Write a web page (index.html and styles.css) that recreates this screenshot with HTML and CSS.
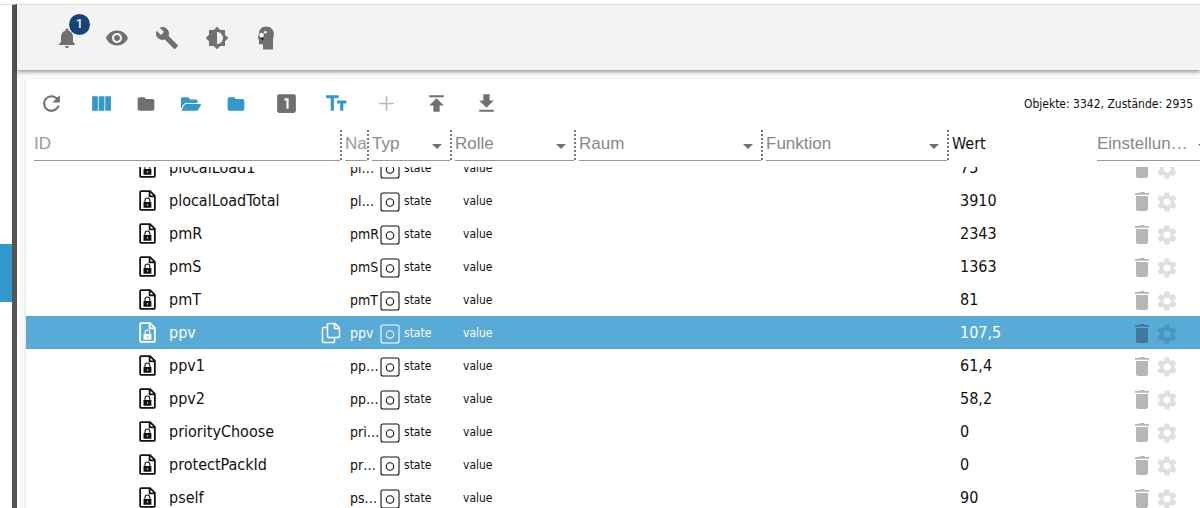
FILE: index.html
```html
<!DOCTYPE html>
<html lang="de">
<head>
<meta charset="utf-8">
<title>Objekte</title>
<link rel="stylesheet" href="styles.css">
</head>
<body>
<svg class="sprite" aria-hidden="true">
  <symbol id="bell" viewBox="0 0 24 24"><path d="M12 22c1.1 0 2-.9 2-2h-4c0 1.1.89 2 2 2zm6-6v-5c0-3.070-1.640-5.640-4.500-6.320V4c0-.83-.67-1.500-1.500-1.500s-1.500.67-1.500 1.500v.68C7.630 5.360 6 7.920 6 11v5l-2 2v1h16v-1l-2-2z"/></symbol>
  <symbol id="eye" viewBox="0 0 24 24"><path d="M12 4.500C7 4.500 2.730 7.610 1 12c1.730 4.390 6 7.500 11 7.500s9.270-3.110 11-7.500c-1.730-4.390-6-7.500-11-7.500zM12 17c-2.760 0-5-2.240-5-5s2.240-5 5-5 5 2.240 5 5-2.240 5-5 5zm0-8c-1.660 0-3 1.340-3 3s1.340 3 3 3 3-1.340 3-3-1.340-3-3-3z"/></symbol>
  <symbol id="wrench" viewBox="0 0 24 24"><path d="M22.700 19l-9.100-9.100c.9-2.300.4-5-1.500-6.900-2-2-5-2.400-7.400-1.300L9 6 6 9 1.600 4.700C.4 7.100.9 10.100 2.900 12.100c1.900 1.900 4.600 2.400 6.900 1.500l9.100 9.100c.4.4 1 .4 1.400 0l2.300-2.300c.5-.4.5-1.100.1-1.400z"/></symbol>
  <symbol id="bright" viewBox="0 0 24 24"><path d="M20 15.310L23.310 12 20 8.690V4h-4.690L12 .69 8.690 4H4v4.690L.69 12 4 15.310V20h4.690L12 23.310 15.310 20H20v-4.690zM12 18V6c3.310 0 6 2.690 6 6s-2.690 6-6 6z"/></symbol>
  <symbol id="head" viewBox="0 0 24 24"><path d="M11.300.5C7 .5 3.900 3.300 3.900 7.500L2.700 12.600l1.200.7V17c0 .9.500 1.300 1.300 1.300H8V23.400h10V12.800c.6-1.400.9-3 .9-4.700C18.900 3.700 15.700.5 11.300.5z"/><circle cx="6.600" cy="9" r="2.300" fill="#fff"/><circle cx="10.400" cy="6.200" r="1.200" fill="#fff"/><circle cx="7.400" cy="13" r="1.200" fill="#222"/></symbol>
  <symbol id="refresh" viewBox="0 0 24 24"><path d="M17.650 6.350C16.200 4.900 14.210 4 12 4c-4.420 0-7.990 3.580-7.990 8s3.570 8 7.990 8c3.730 0 6.840-2.550 7.730-6h-2.080c-.82 2.330-3.040 4-5.650 4-3.310 0-6-2.690-6-6s2.690-6 6-6c1.660 0 3.140.69 4.220 1.780L13 11h7V4l-2.350 2.350z"/></symbol>
  <symbol id="columns" viewBox="0 0 24 24"><path d="M3 5h5.500v14H3zM9.300 5h5.500v14H9.300zM15.600 5h5.500v14h-5.500z"/></symbol>
  <symbol id="folder" viewBox="0 0 24 24"><path d="M10 4H4c-1.100 0-1.990.9-1.990 2L2 18c0 1.100.9 2 2 2h16c1.100 0 2-.9 2-2V8c0-1.100-.9-2-2-2h-8l-2-2z"/></symbol>
  <symbol id="folder-open" viewBox="0 0 576 512"><path d="M572.700 292.100L500.300 416.200A64 64 0 0 1 445 448H45.100c-18.500 0-30-20.100-20.700-36.100l72.400-124.100A64 64 0 0 1 152 256h400c18.500 0 30 20.100 20.700 36.100zM152 224h328v-48c0-26.500-21.500-48-48-48H272l-64-64H48C21.500 64 0 85.500 0 112v278.100l69.100-118.400C86.200 242.300 118 224 152 224z"/></symbol>
  <symbol id="one" viewBox="0 0 24 24"><path d="M19 3H5c-1.100 0-2 .9-2 2v14c0 1.100.9 2 2 2h14c1.100 0 2-.9 2-2V5c0-1.100-.9-2-2-2zm-5 14h-2V9h-2V7h4v10z"/></symbol>
  <symbol id="size" viewBox="0 0 24 24"><path d="M2 4v3h4.500v12h3V7H14V4H2zm19.500 5h-9v3h3v7h3v-7h3V9z"/></symbol>
  <symbol id="plus" viewBox="0 0 24 24"><path d="M19 12.800h-6.200V19h-1.600v-6.200H5v-1.600h6.200V5h1.600v6.200H19z"/></symbol>
  <symbol id="upload" viewBox="0 0 24 24"><path d="M5 4v2h14V4H5zm0 10h4v6h6v-6h4l-7-7-7 7z"/></symbol>
  <symbol id="download" viewBox="0 0 24 24"><path d="M19 9h-4V3H9v6H5l7 7 7-7zM5 18v2h14v-2H5z"/></symbol>
  <symbol id="file-lock" viewBox="0 0 16 20"><path d="M2 1H10.500l4.500 4.500V18a1 1 0 0 1-1 1H2a1 1 0 0 1-1-1V2a1 1 0 0 1 1-1zM10 1v5h5" fill="none" stroke="currentColor" stroke-width="1.700"/><path d="M5.600 12V9.900a2.300 2.300 0 0 1 4.600 0V12" fill="none" stroke="currentColor"/><path fill-rule="evenodd" d="M4.200 11.500h7.500v5.500H4.200zM7.400 13.600h1.200v1.200H7.400z"/></symbol>
  <symbol id="state" viewBox="0 0 20 20"><rect x="1" y="1" width="18" height="18" rx="2" fill="none" stroke="currentColor" stroke-width="1.100"/><circle cx="10" cy="10.500" r="3.700" fill="none" stroke="currentColor" stroke-width="1.100"/></symbol>
  <symbol id="copy" viewBox="0 0 20 22"><path d="M7.500 1.500H14l4.500 4.500v8.500a1 1 0 0 1-1 1h-10a1 1 0 0 1-1-1v-12a1 1 0 0 1 1-1zM13.500 1.500v5h5M6.500 5.500h-4a1 1 0 0 0-1 1v13a1 1 0 0 0 1 1h10a1 1 0 0 0 1-1v-4" fill="none" stroke="currentColor" stroke-width="1.500"/></symbol>
  <symbol id="trash" viewBox="0 0 24 24"><path d="M6 19c0 1.100.9 2 2 2h8c1.100 0 2-.9 2-2V6H6v13zM19 3h-4l-1-1h-4l-1 1H5v1.700h14z"/></symbol>
  <symbol id="gear" viewBox="0 0 24 24"><path d="M19.140 12.940c.04-.3.060-.61.060-.94s-.02-.64-.07-.94l2.030-1.580c.18-.14.23-.41.12-.61l-1.920-3.320c-.12-.22-.37-.29-.59-.22l-2.390.96c-.5-.38-1.030-.7-1.620-.94l-.36-2.540c-.04-.24-.24-.41-.48-.41h-3.840c-.24 0-.43.17-.47.41l-.36 2.540c-.59.24-1.130.57-1.620.94l-2.390-.96c-.22-.08-.47 0-.59.22L2.740 8.870c-.12.21-.08.47.12.61l2.030 1.580c-.05.3-.09.63-.09.94s.02.64.07.94l-2.030 1.580c-.18.14-.23.41-.12.61l1.920 3.320c.12.22.37.29.59.22l2.390-.96c.5.38 1.030.7 1.620.94l.36 2.540c.05.24.24.41.48.41h3.840c.24 0 .44-.17.47-.41l.36-2.540c.59-.24 1.130-.56 1.620-.94l2.390.96c.22.08.47 0 .59-.22l1.920-3.320c.12-.22.07-.47-.12-.61l-2.010-1.580zM12 15.600c-1.980 0-3.600-1.620-3.600-3.600s1.620-3.600 3.600-3.600 3.600 1.620 3.600 3.600-1.620 3.600-3.600 3.600z"/></symbol>
</svg>
<div class="app">
  <nav class="drawer" aria-label="Menü"><a class="drawer-active" href="#objects" aria-label="Objekte"></a></nav>
  <main class="main">
    <header class="appbar">
      <button class="bar-btn" aria-label="Benachrichtigungen"><svg class="i-bar"><use href="#bell"/></svg><span class="badge">1</span></button>
      <button class="bar-btn" aria-label="Ansicht"><svg class="i-bar"><use href="#eye"/></svg></button>
      <button class="bar-btn" aria-label="Systemeinstellungen"><svg class="i-bar"><use href="#wrench"/></svg></button>
      <button class="bar-btn" aria-label="Farbschema"><svg class="i-bar"><use href="#bright"/></svg></button>
      <button class="bar-btn" aria-label="Expertenmodus"><svg class="i-bar"><use href="#head"/></svg></button>
    </header>
    <section class="panel">
      <div class="toolbar">
        <button class="tool" aria-label="Aktualisieren"><svg class="i-tool"><use href="#refresh"/></svg></button>
        <button class="tool blue" aria-label="Spalten"><svg class="i-tool"><use href="#columns"/></svg></button>
        <button class="tool narrow" aria-label="Alle zuklappen"><svg class="i-folder"><use href="#folder"/></svg></button>
        <button class="tool narrow blue" aria-label="Alle aufklappen"><svg class="i-folder"><use href="#folder-open"/></svg></button>
        <button class="tool narrow blue" aria-label="Eine Ebene zuklappen"><svg class="i-folder"><use href="#folder"/></svg></button>
        <button class="tool" aria-label="Eine Ebene aufklappen"><svg class="i-tool"><use href="#one"/></svg></button>
        <button class="tool blue" aria-label="Namen anzeigen"><svg class="i-tool"><use href="#size"/></svg></button>
        <button class="tool off" aria-label="Hinzufügen" disabled><svg class="i-tool"><use href="#plus"/></svg></button>
        <button class="tool" aria-label="Importieren"><svg class="i-tool"><use href="#upload"/></svg></button>
        <button class="tool" aria-label="Exportieren"><svg class="i-tool"><use href="#download"/></svg></button>
        <span class="count">Objekte: 3342, Zustände: 2935</span>
      </div>
      <div class="filters">
        <div class="filter"><input class="field" aria-label="ID" placeholder="ID"></div>
        <div class="filter"><input class="field" aria-label="Name" placeholder="Name"></div>
        <div class="filter"><select class="field" aria-label="Typ"><option>Typ</option></select></div>
        <div class="filter"><select class="field" aria-label="Rolle"><option>Rolle</option></select></div>
        <div class="filter"><select class="field" aria-label="Raum"><option>Raum</option></select></div>
        <div class="filter"><select class="field" aria-label="Funktion"><option>Funktion</option></select></div>
        <div class="label">Wert</div>
        <div class="filter last"><select class="field" aria-label="Einstellungen"><option>Einstellun…</option></select></div>
      </div>
      <div class="list">
        <table class="objects">
          <colgroup><col><col class="c-name"><col class="c-type"><col class="c-role"><col class="c-value"><col class="c-actions"></colgroup>
          <tbody id="rows"></tbody>
        </table>
      </div>
    </section>
  </main>
</div>
<script src="rows.js"></script>
</body>
</html>
```
FILE: rows.js
```js
const rows = [
  ["plocalLoad1", "pl…", "75"],
  ["plocalLoadTotal", "pl…", "3910"],
  ["pmR", "pmR", "2343"],
  ["pmS", "pmS", "1363"],
  ["pmT", "pmT", "81"],
  ["ppv", "ppv", "107,5"],
  ["ppv1", "pp…", "61,4"],
  ["ppv2", "pp…", "58,2"],
  ["priorityChoose", "pri…", "0"],
  ["protectPackId", "pr…", "0"],
  ["pself", "ps…", "90"]
];
const icon = (id, cls) => `<svg class="${cls}"><use href="#${id}"/></svg>`;
document.getElementById("rows").innerHTML = rows.map(([id, name, value]) => {
  const selected = id === "ppv";
  const copy = selected ? `<button class="copy" aria-label="ID kopieren">${icon("copy", "i-copy")}</button>` : "";
  return `<tr class="row${selected ? " selected" : ""}">
    <td><div class="id">${icon("file-lock", "i-file")}<span>${id}</span>${copy}</div></td>
    <td class="name">${name}</td>
    <td><div class="type">${icon("state", "i-state")}<span>state</span></div></td>
    <td class="role">value</td>
    <td class="value">${value}</td>
    <td><div class="actions"><button class="act" aria-label="${id} löschen">${icon("trash", "i-act")}</button><button class="act faint" aria-label="${id} konfigurieren">${icon("gear", "i-act")}</button></div></td>
  </tr>`;
}).join("");
```
FILE: styles.css
```css
* { box-sizing: border-box; }
body {
  margin: 0;
  font-family: Tahoma, "DejaVu Sans Condensed", "Noto Sans", sans-serif;
  font-size: 16px;
  color: #111;
  background: #fff;
}
button {
  border: 0;
  padding: 0;
  background: none;
  color: inherit;
  display: flex;
  align-items: center;
  justify-content: center;
}
svg { fill: currentColor; display: block; flex: none; }
.sprite { width: 0; height: 0; position: absolute; }
.app {
  display: flex;
  height: 100vh;
  padding-top: 4px;
  overflow: hidden;
}
.drawer {
  flex: none;
  width: 17px;
  border-top: 1px solid #ddd;
  border-right: 5px solid #555;
  padding-top: 239px;
}
.drawer-active { display: block; height: 58px; background: #3399cc; }
.main {
  flex: 1;
  min-width: 0;
  display: flex;
  flex-direction: column;
  background: #fafafa;
}
.appbar {
  flex: none;
  height: 66px;
  padding-left: 25px;
  display: flex;
  align-items: center;
  background: #f3f3f3;
  color: #707070;
  border-top: 1px solid #ddd;
  box-shadow: 0 2px 4px rgba(0, 0, 0, .4);
}
.bar-btn { position: relative; width: 50px; height: 50px; }
.i-bar { width: 24px; height: 24px; }
.badge {
  position: absolute;
  top: 1px;
  right: 2px;
  width: 21px;
  line-height: 21px;
  border-radius: 50%;
  background: #164477;
  color: #fff;
  font-family: Roboto, sans-serif;
  font-size: 12px;
  font-weight: 500;
}
.panel {
  flex: 1;
  min-height: 0;
  margin: 9px 0 0 9px;
  display: flex;
  flex-direction: column;
  background: #fff;
  box-shadow: 0 1px 3px rgba(0, 0, 0, .2);
  border-radius: 4px 0 0 0;
}
.toolbar {
  flex: none;
  height: 49px;
  display: flex;
  align-items: center;
  color: #707070;
}
.tool { width: 50px; height: 48px; }
.narrow { width: 45px; justify-content: flex-start; padding-left: 10px; }
.blue { color: #3399cc; }
.off { color: #bbb; }
.i-tool { width: 25px; height: 25px; }
.i-folder { width: 20px; height: 20px; }
.count { margin-left: auto; padding-right: 7px; font-size: 12px; color: #111; }
.filters {
  flex: none;
  display: grid;
  grid-template-columns: minmax(60px, 1fr) 27px 83px 124px 187px 186px 145px 119px;
  margin: 2px -16px 0 8px;
  height: 31px;
}
.filter { display: flex; min-width: 0; }
.filter::after {
  content: "";
  flex: none;
  height: 30px;
  margin-right: 3px;
  border-left: 2px dotted #777;
}
.last::after { display: none; }
.field {
  flex: 1;
  min-width: 0;
  width: 0;
  padding: 0 0 3px;
  border: 0;
  border-bottom: 1px solid #999;
  border-radius: 0;
  background: none;
  color: #888;
  font: 17px "Liberation Sans", Arial, sans-serif;
  appearance: none;
}
.field::placeholder { color: #999; }
select.field {
  background: url("data:image/svg+xml,%3Csvg xmlns='http://www.w3.org/2000/svg' viewBox='0 0 10 5'%3E%3Cpath d='M0 0h10L5 5z' fill='%23707070'/%3E%3C/svg%3E") no-repeat right 8px top 14px / 10px 5px;
}
.label { line-height: 28px; }
.list { flex: 1; min-height: 0; margin-top: 6px; overflow: hidden; }
.objects {
  width: 100%;
  table-layout: fixed;
  border-collapse: collapse;
  margin-top: -16px;
}
.c-name { width: 30px; }
.c-type { width: 83px; }
.c-role { width: 497px; }
.c-value { width: 170px; }
.c-actions { width: 70px; }
td { padding: 0; height: 33px; }
.id { display: flex; align-items: center; padding-left: 113px; }
.i-file { width: 17px; height: 21px; margin-right: 13px; }
.name { font-size: 14px; overflow: hidden; white-space: nowrap; }
.copy { margin-left: auto; margin-right: 9px; }
.i-copy { width: 20px; height: 22px; }
.type { display: flex; align-items: center; gap: 4px; font-size: 12px; }
.i-state { width: 20px; height: 20px; margin-top: 2px; }
.role { font-size: 12px; }
.actions { display: flex; gap: 1px; padding-top: 2px; }
.act { color: #000; opacity: .28; width: 24px; height: 24px; }
.faint { opacity: .12; }
.i-act { width: 24px; height: 24px; }
.selected { background: #58abd7; color: #fff; }
```
